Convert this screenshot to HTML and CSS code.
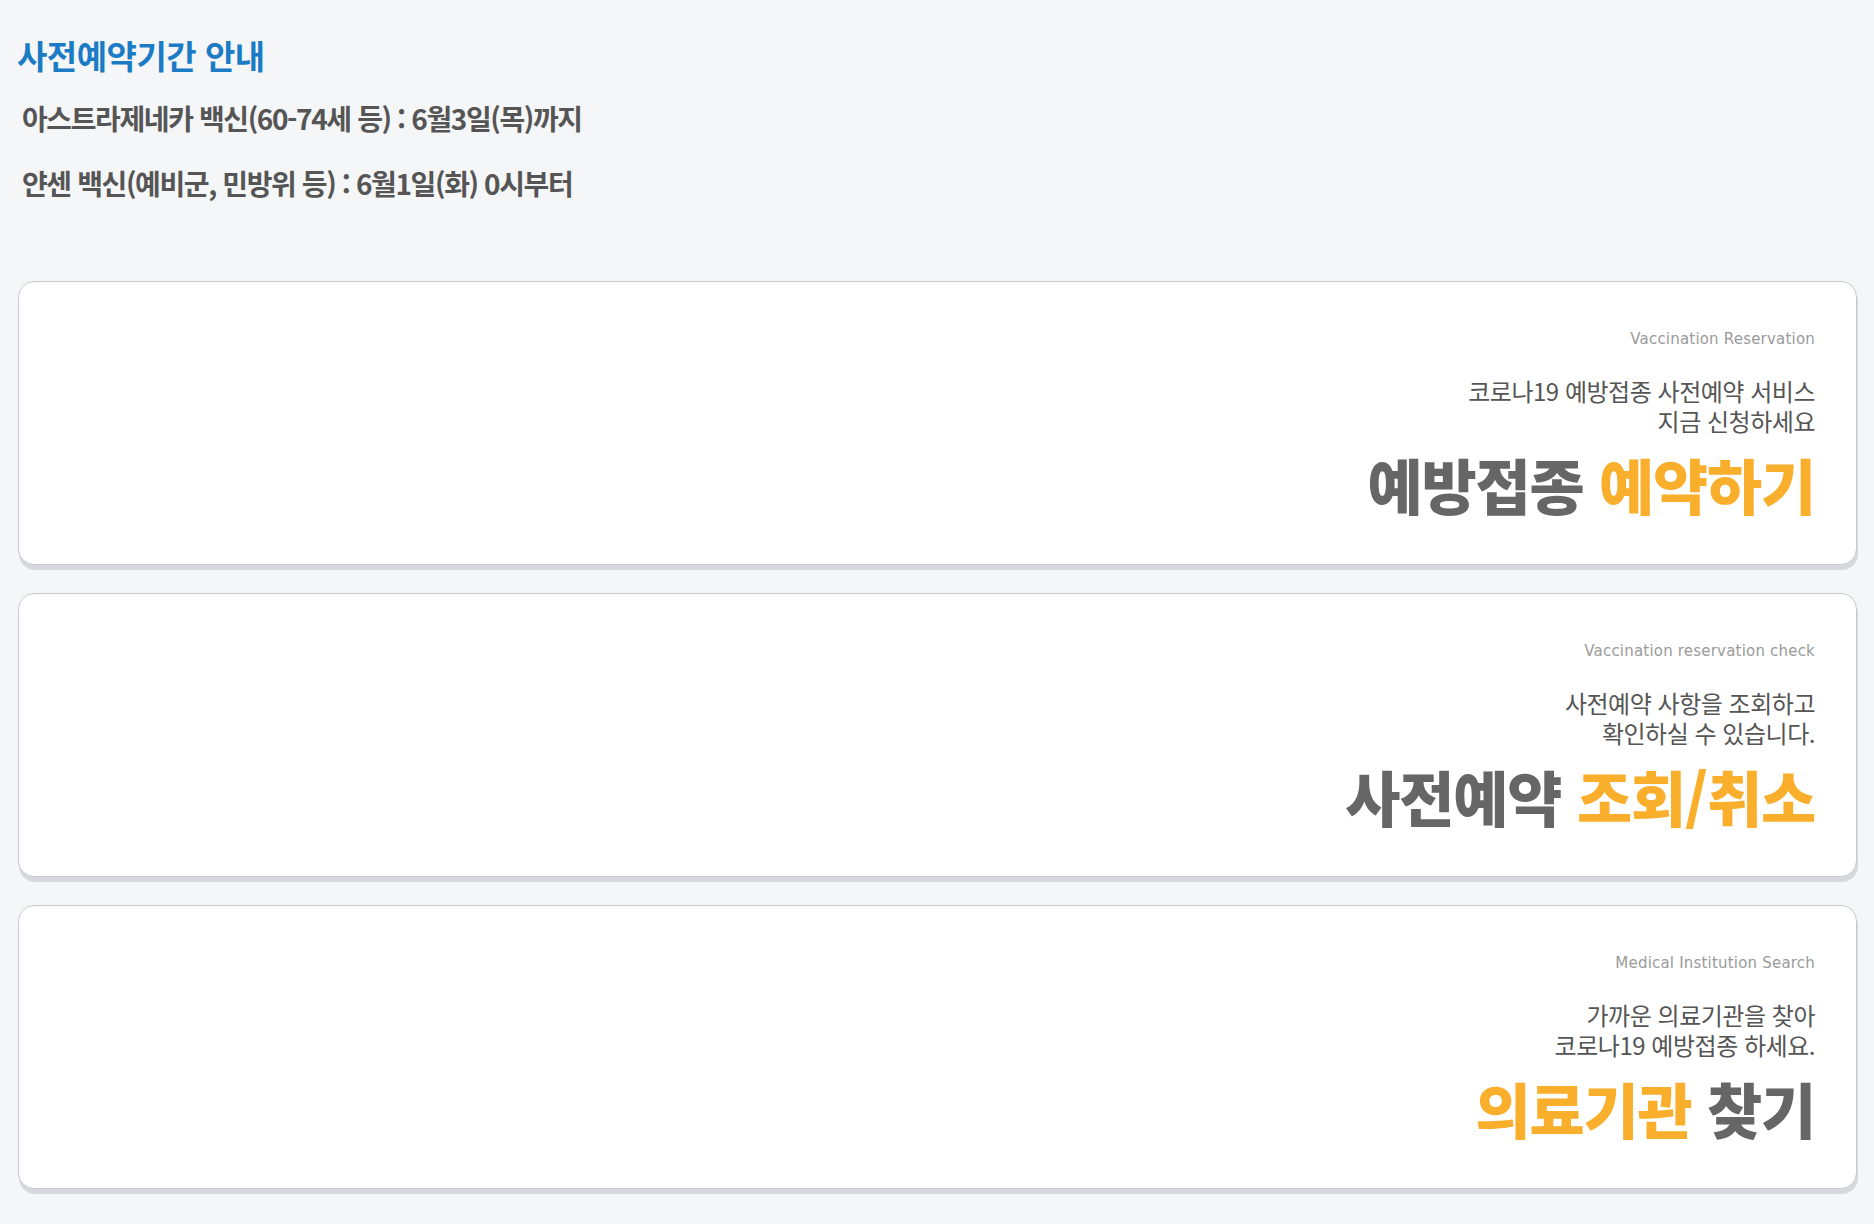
FILE: index.html
```html
<!DOCTYPE html>
<html lang="ko">
<head>
<meta charset="utf-8">
<title>사전예약</title>
<link rel="stylesheet" href="styles.css">
</head>
<body>
<section class="notice">
  <h1 class="notice-title">사전예약기간 안내</h1>
  <p class="notice-line">아스트라제네카 백신(60-74세 등) : 6월3일(목)까지</p>
  <p class="notice-line">얀센 백신(예비군, 민방위 등) : 6월1일(화) 0시부터</p>
</section>
<main class="cards">
  <a class="card" href="#">
    <span class="card-en">Vaccination Reservation</span>
    <span class="card-desc">코로나19 예방접종 사전예약 서비스<br>지금 신청하세요</span>
    <strong class="card-title">예방접종 <em class="hl">예약하기</em></strong>
  </a>
  <a class="card" href="#">
    <span class="card-en">Vaccination reservation check</span>
    <span class="card-desc">사전예약 사항을 조회하고<br>확인하실 수 있습니다.</span>
    <strong class="card-title">사전예약 <em class="hl">조회/취소</em></strong>
  </a>
  <a class="card" href="#">
    <span class="card-en">Medical Institution Search</span>
    <span class="card-desc">가까운 의료기관을 찾아<br>코로나19 예방접종 하세요.</span>
    <strong class="card-title"><em class="hl">의료기관</em> 찾기</strong>
  </a>
</main>
</body>
</html>
```
FILE: styles.css
```css
html, body {
  margin: 0;
  padding: 0;
}
body {
  background: #f5f6f8;
  font-family: "Noto Sans CJK KR", "Noto Sans", sans-serif;
  padding: 30px 17px 24px 18px;
}
.notice {
  height: 251px;
}
.notice-title {
  margin: 0 0 0 -1px;
  font-size: 33px;
  font-weight: 700;
  color: #1b7cc5;
  letter-spacing: -0.015em;
  line-height: 50px;
}
.notice-line {
  margin: 19px 0 0 4px;
  font-size: 28px;
  font-weight: 700;
  color: #555555;
  letter-spacing: -0.05em;
  line-height: 38px;
}
.notice-line + .notice-line {
  margin-top: 27px;
}
.cards {
  display: flex;
  flex-direction: column;
  gap: 28px;
}
.card {
  display: flex;
  flex-direction: column;
  align-items: flex-end;
  text-align: right;
  height: 284px;
  box-sizing: border-box;
  padding: 45px 41px 0 0;
  background: #ffffff;
  border: 1px solid #c8c9cf;
  border-radius: 16px;
  box-shadow: 1px 5px 0 #d7d8dc;
  text-decoration: none;
}
.card-en {
  font-family: "DejaVu Sans", Verdana, sans-serif;
  font-size: 15px;
  color: #9a9a9a;
  line-height: 24px;
  letter-spacing: 0.2px;
}
.card-desc {
  margin-top: 25px;
  font-size: 24px;
  color: #555555;
  line-height: 30px;
  letter-spacing: -0.02em;
}
.card-title {
  margin-top: 18px;
  font-size: 60px;
  font-weight: 900;
  color: #666666;
  line-height: 60px;
  letter-spacing: -0.02em;
}
.hl {
  font-style: normal;
  color: #f9ae2c;
}
```
